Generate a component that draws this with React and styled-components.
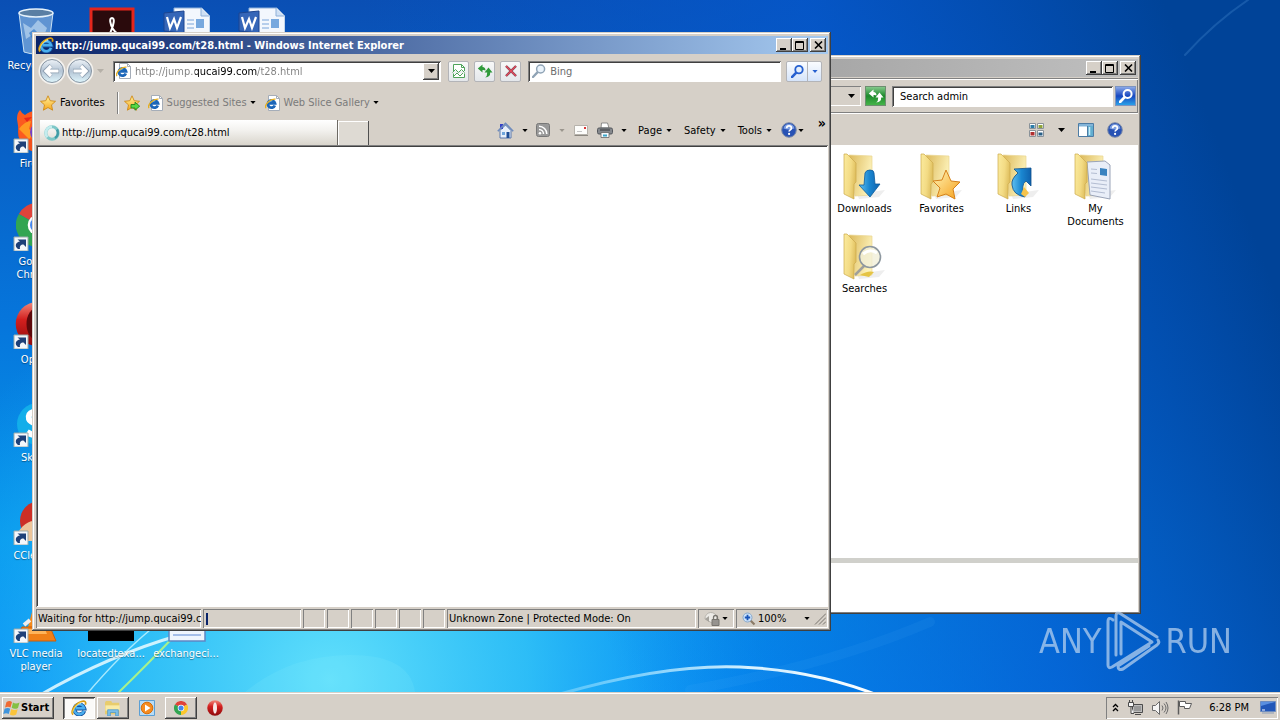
import React from 'react';
import styled, { createGlobalStyle } from 'styled-components';

const FACE = '#d6d0c8';
const raised = `box-shadow: inset -1px -1px #404040, inset 1px 1px #fff, inset -2px -2px #808080;`;
const sunken = `box-shadow: inset 1px 1px #808080, inset -1px -1px #fff;`;
const well = `box-shadow: inset 1px 1px #808080, inset -1px -1px #fff, inset 2px 2px #404040;`;

const GlobalStyle = createGlobalStyle`
  * { box-sizing: border-box; }
  body { margin: 0; font: 11px/13px "DejaVu Sans Condensed", "DejaVu Sans", sans-serif; color: #000; }
  button, input, select { font: inherit; color: inherit; margin: 0; padding: 0; border: 0; background: none; outline: 0; }
  svg { display: block; flex: none; }
  a { color: inherit; text-decoration: none; }
`;

/* ---------- desktop ---------- */
const Screen = styled.div`
  display: flex; flex-direction: column; height: 100vh; position: relative; overflow: hidden;
`;
const Wallpaper = styled.svg`position: absolute; inset: 0; width: 100%; height: 100%;`;
const Desktop = styled.main`flex: 1; position: relative; min-height: 0;`;
const IconGrid = styled.div`
  display: grid; grid-template-columns: repeat(4, 75px); grid-auto-rows: 98px; padding-top: 7px;
`;
const Shortcut = styled.a`
  grid-column: ${p => p.$col}; grid-row: ${p => p.$row};
  display: flex; flex-direction: column; align-items: center; gap: 4px;
  padding: 0 4px 0 1px; color: #fff; text-align: center; text-shadow: 0 1px 1px #0006;
`;
const Watermark = styled.div`
  position: absolute; right: 48px; bottom: 20px; display: flex; align-items: center; gap: 4px;
  color: #b9d3f0; opacity: .72; font-size: 34px; line-height: 62px;
`;

/* ---------- windows ---------- */
const Window = styled.section`
  position: absolute; display: flex; flex-direction: column; padding: 4px 3px 2px 4px; background: ${FACE};
  box-shadow: inset -1px -1px #404040, inset 1px 1px ${FACE}, inset -2px -2px #808080, inset 2px 2px #fff;
`;
const ExplorerWindow = styled(Window)`inset: 55px 139px 78px 340px;`;
const BrowserWindow = styled(Window)`inset: 32px 449px 61px 32px;`;
const TitleBar = styled.header`
  display: flex; align-items: center; height: 18px; padding: 0 2px; color: #fff; font-weight: bold; flex: none;
  background: linear-gradient(90deg, ${p => (p.$active ? '#0a246a, #a6caf0' : '#808080, #c0c0c0')});
`;
const Title = styled.h1`flex: 1; margin: 0; padding-left: 1px; font: inherit; white-space: nowrap; overflow: hidden;`;
const WinButton = styled.button`
  width: 16px; height: 14px; display: grid; place-items: center; background: ${FACE}; ${raised}
  margin-left: ${p => (p.$apart ? 2 : 0)}px;
`;
const Row = styled.div`display: flex; align-items: center; flex: none;`;
const Spacer = styled.span`flex: 1;`;

/* ---------- browser ---------- */
const NavBar = styled(Row)`height: 34px; padding: 0 6px 0 2px; gap: 5px;`;
const Travel = styled.div`display: flex; align-items: center; width: 70px; flex: none;`;
const TravelButton = styled.button`width: 28px; height: 28px;`;
const Caret = styled.button`width: 13px; height: 20px; display: grid; place-items: center;`;
const AddressBox = styled.div`
  display: flex; align-items: center; flex: 1 1 330px; height: 21px; padding: 2px 2px 2px 3px; background: #fff; ${well}
`;
const AddressInput = styled.input`
  flex: 1; min-width: 0; margin-left: 3px; height: 17px; color: transparent;
  background: linear-gradient(90deg, #808080 60px, #000 60px 122px, #808080 122px) no-repeat;
  -webkit-background-clip: text; background-clip: text;
`;
const DropButton = styled.button`
  width: 16px; height: 17px; display: grid; place-items: center; background: ${FACE}; ${raised}
`;
const ToolButton = styled.button`
  width: 21px; height: 21px; display: grid; place-items: center; flex: none;
  border: 1px solid #b3b4b8; border-radius: 2px; background: linear-gradient(#f8f8f8, #e4e7eb);
`;
const ToolGroup = styled.div`display: flex; gap: 5px; padding: 0 2px; flex: none;`;
const SearchBox = styled.div`
  display: flex; align-items: center; flex: 1 1 254px; height: 21px; padding: 0 4px; gap: 4px; background: #fff; ${well}
`;
const SearchInput = styled.input`flex: 1; min-width: 0; color: #6d6d6d; &::placeholder { color: #6d6d6d; opacity: 1; }`;
const GoGroup = styled.div`
  display: flex; border: 1px solid #b3b4b8; border-radius: 2px; background: linear-gradient(#fafcff, #d5e4fa); flex: none;
`;
const GoButton = styled.button`
  width: ${p => p.$w}px; height: 19px; display: grid; place-items: center; & + & { border-left: 1px solid #b3b4b8; }
`;
const FavBar = styled(Row)`height: 29px; padding: 0 4px;`;
const FavButton = styled.button`
  display: flex; align-items: center; gap: ${p => (p.$dim ? 3 : 4)}px; color: ${p => (p.$dim ? '#7b7b7b' : '#000')};
  margin-right: ${p => p.$after}px;
`;
const Divider = styled.span`width: 2px; height: 22px; border-left: 1px solid #808080; border-right: 1px solid #fff; margin: 0 5px 0 12px;`;
const TabRow = styled(Row)`height: 28px; padding-left: 4px; align-items: flex-end;`;
const Tab = styled.button`
  display: flex; align-items: center; gap: 2px; flex: 0 1 298px; height: 25px; padding: 0 4px;
  background: linear-gradient(#fff, #f3f2ef 40%, #d9d5cc); border-right: 1px solid #6d6a64; white-space: nowrap;
`;
const NewTab = styled.button`
  width: 31px; height: 24px; background: #dedad3; box-shadow: inset 1px 1px #fff; border-right: 1px solid #505050;
`;
const CommandBar = styled.div`display: flex; align-items: center; height: 28px; padding: 0 2px 2px 0;`;
const Command = styled.button`
  display: flex; align-items: center; gap: ${p => p.$gap}px; margin-right: ${p => p.$after}px; height: 22px;
`;
const Chevron = styled.button`align-self: flex-start; font-size: 14px; line-height: 12px; font-weight: bold;`;
const Page = styled.div`flex: 1; min-height: 0; background: #fff; ${well}`;
const StatusBar = styled.footer`display: flex; height: 22px; padding: 2px 0 1px; gap: 2px; flex: none;`;
const StatusCell = styled.div`
  flex: ${p => p.$grow || 0} 1 ${p => p.$w}px; min-width: 0; padding: 0 2px; line-height: 17px; height: 19px;
  overflow: hidden; white-space: nowrap; display: flex; align-items: center; ${sunken}
`;
const Progress = styled.span`width: 2px; height: 12px; background: #0a246a; margin-left: 1px;`;
const StatusMenu = styled.button`display: flex; align-items: center; flex: 1; justify-content: space-between; padding: 0 4px;`;
const Zoom = styled.span`display: flex; align-items: center; gap: 2px;`;

/* ---------- explorer ---------- */
const Rebar = styled(Row)`
  height: 36px; margin-top: 1px; padding: 0 2px; gap: 4px; box-shadow: inset 0 1px #808080, inset 0 2px #fff, inset 0 -1px #fff, inset 0 -2px #808080, inset -1px 0 #808080;
`;
const PathBox = styled.div`
  flex: 1; height: 20px; display: flex; justify-content: flex-end; align-items: center; padding-right: 3px; ${sunken}
`;
const Refresh = styled.button`width: 21px; height: 20px; display: grid; place-items: center; background: linear-gradient(#83c88a, #1d8a2c 50%, #46b449); border: 1px solid #6e8e70;`;
const FindBox = styled.input`
  width: 221px; height: 21px; padding: 0 8px; margin-left: 2px; background: #fff; ${well}
  &::placeholder { color: #000; opacity: 1; }
`;
const FindButton = styled.button`width: 21px; height: 20px; display: grid; place-items: center; margin-left: -2px; background: linear-gradient(#8aa8e8, #1747c0 50%, #2aa0e8); border: 1px solid #7d94c0;`;
const ViewBar = styled(Row)`height: 31px; padding-right: 15px; gap: 13px; justify-content: flex-end;`;
const IconButton = styled.button`height: 20px; display: grid; place-items: center;`;
const Files = styled.div`
  flex: 1; background: #fff; min-height: 0; padding: 8px 4px; display: grid; justify-content: end; align-content: start;
  grid-template-columns: repeat(4, 77px); grid-auto-rows: 80px;
`;
const File = styled.a`display: flex; flex-direction: column; align-items: center; gap: 1px; text-align: center; padding: 0 8px;`;
const Details = styled.div`height: 54px; background: #fff; border-top: 5px solid #d0d0cb; flex: none;`;

/* ---------- taskbar ---------- */
const Taskbar = styled.nav`
  position: relative; display: flex; align-items: center; gap: 2px; height: 28px; padding: 3px 2px 0; background: ${FACE};
  box-shadow: inset 0 1px ${FACE}, inset 0 2px #fff; flex: none;
`;
const Start = styled.button`
  display: flex; align-items: center; gap: 0; width: 52px; height: 22px; padding: 0 1px; margin-right: 7px;
  background: ${FACE}; font-weight: bold; ${raised}
`;
const Task = styled.button`
  width: 32px; height: 22px; display: grid; place-items: center;
  ${p => p.$state === 'open' && raised}
  ${p => p.$state === 'active' && `background: #fbfaf8; box-shadow: inset 1px 1px #404040, inset -1px -1px #fff, inset 2px 2px #808080;`}
`;
const Tray = styled.div`display: flex; align-items: center; gap: 8px; height: 22px; width: 172px; padding: 0 2px 0 6px; ${sunken}`;
const Clock = styled.time`flex: 1; text-align: right; padding-right: 3px; white-space: nowrap;`;

/* ---------- drawings ---------- */
const Arrow = ({ c = '#000', big }) => (
  <svg width={big ? 7 : 6} height={big ? 4 : 3} viewBox="0 0 7 4"><path d="M0 0h7L3.500 4z" fill={c} /></svg>
);
const IE = ({ s = 16 }) => (
  <svg width={s} height={s} viewBox="0 0 16 16" fill="none">
    <path d="M13.200 11A5 5 0 1 1 13.300 8.400H5" stroke="#155099" strokeWidth="4" />
    <path d="M13 10.800A5 5 0 1 1 13.100 8.200H5" stroke="#49aeef" strokeWidth="2.500" />
    <path d="M4.200 6.800q2-3.500 6-3" stroke="#b5e4ff" strokeWidth="1.100" />
    <path d="M2.200 14.500C-1 12 4 3.500 10.500 1.500 13.600.6 15.500 1.500 14.300 4.800" stroke="#d89a10" strokeWidth="1.700" />
    <path d="M2.300 13.800C.4 11.500 4.500 4.300 10.200 2.100" stroke="#ffe05a" strokeWidth=".9" />
  </svg>
);
const PageIE = () => (
  <svg width="16" height="16" viewBox="0 0 16 16" fill="none">
    <path d="M3.500.5h8l3 3v12h-11z" fill="#fff" stroke="#a5adb8" /><path d="M11.500.5v3h3" stroke="#a5adb8" />
    <path d="M9.800 10.500A3.600 3.600 0 1 1 10 8.300H3.500" stroke="#1b65b8" strokeWidth="2.800" />
    <path d="M4 7.500q1-2 3.200-1.800" stroke="#8fd0fa" strokeWidth="1" />
    <path d="M1 13.200C-1 10 5 3.500 10.500 4.200" stroke="#e8b020" strokeWidth="1.300" />
  </svg>
);
const STAR = 'M8 .8l2.200 4.900 5.300.6-4 3.600 1.100 5.300L8 12.500l-4.600 2.700 1.100-5.300-4-3.600 5.300-.6z';
const Star = ({ add }) => (
  <svg width="16" height="16" viewBox="0 0 16 16">
    <defs><linearGradient id="star" x2="0" y2="1"><stop stopColor="#fff3a0" /><stop offset="1" stopColor="#f7a81c" /></linearGradient></defs>
    <path d={STAR} fill="url(#star)" stroke="#cf8a18" strokeWidth=".9" />
    {add && <path d="M7 9.500h4V7.200l4.700 4-4.700 4V13H7z" fill="#57d843" stroke="#23851d" strokeWidth=".9" />}
  </svg>
);
const TravelIcon = ({ fwd }) => (
  <svg width="28" height="28" viewBox="0 0 28 28">
    <defs><linearGradient id="travel" x2="0" y2="1"><stop stopColor="#eef3f8" /><stop offset=".5" stopColor="#b4c4d4" /><stop offset="1" stopColor="#dff6fc" /></linearGradient></defs>
    <circle cx="14" cy="14" r="13.500" fill="#f4f2ee" />
    <circle cx="14" cy="14" r="11.500" fill="url(#travel)" stroke="#8794a2" />
    <g transform={fwd ? 'rotate(180 14 14)' : undefined} fill="none">
      <path d="M7.500 14H21M13 8.500L7.500 14l5.500 5.500" stroke="#8d9eb0" strokeWidth="4.400" />
      <path d="M8 14h12.500M13 9l-5 5 5 5" stroke="#fff" strokeWidth="3.200" />
    </g>
  </svg>
);
const Lens = ({ c = '#8fa3b5', fill = '#eaf3fb', s = 14, w = 1.5 }) => (
  <svg width={s} height={s} viewBox="0 0 14 14" fill="none">
    <path d="M5.400 8.400L1 13" stroke={c} strokeWidth={w + 0.8} strokeLinecap="round" /><circle cx="8.600" cy="5" r="4" fill={fill} stroke={c} strokeWidth={w} />
  </svg>
);
const Swap = ({ c = '#2f9a3a' }) => (
  <svg width="16" height="16" viewBox="0 0 16 16" fill={c}>
    <path d="M.8 5.500L5.500 1.500V4q3 0 3 3.500Q7.500 6.800 5.500 7v2.500z" />
    <path d="M7.500 9.500L11.500 4.500l4 5h-2.300q.2 4.500-5 5 2.200-1.500 2-5z" />
  </svg>
);
const Broken = () => (
  <svg width="14" height="16" viewBox="0 0 14 16" fill="none" stroke="#4fa35a">
    <path d="M1.500 8V1.500h8l3 3V8M1.500 10.500v4h11v-4" fill="#fff" /><path d="M9.500 1.500v3h3M.5 9.500l3-3 3 3 3-3 3 3M2 13l3-3 3 3 3-3" />
  </svg>
);
const Stop = () => (
  <svg width="14" height="14" viewBox="0 0 14 14"><path d="M2 2l10 10M12 2L2 12" stroke="#6b4a58" strokeWidth="2.400" /><path d="M2 2l10 10M12 2L2 12" stroke="#e5485a" strokeWidth="1.400" /></svg>
);
const Home = () => (
  <svg width="17" height="17" viewBox="0 0 17 17">
    <path d="M3 8.500v7.500h11V8.500L8.500 3z" fill="#e8f0fa" stroke="#5a79ad" /><path d="M3 2h3v5H3z" fill="#3540c8" />
    <path d="M.8 9.200L8.500 1.500l7.700 7.700" fill="none" stroke="#6f8cbd" strokeWidth="1.600" /><path d="M9.500 10h3v6h-3z" fill="#1f4e96" /><path d="M5 10h3v3H5z" fill="#70a6dc" />
  </svg>
);
const Feed = () => (
  <svg width="14" height="14" viewBox="0 0 14 14" fill="none">
    <rect x=".5" y=".5" width="13" height="13" rx="2" fill="#999" stroke="#777" />
    <circle cx="4" cy="10.300" r="1.300" fill="#fff" /><path d="M3 6.500a4.500 4.500 0 0 1 4.500 4.500M3 3.200A7.800 7.800 0 0 1 10.800 11" stroke="#fff" strokeWidth="1.500" />
  </svg>
);
const Mail = () => (
  <svg width="14" height="11" viewBox="0 0 14 11"><path d="M.5.5h13v9H.5z" fill="#fdfdfb" stroke="#b7b3ac" /><path d="M.5 10.500h13.500" stroke="#8b8780" /><path d="M10 2h2v2h-2z" fill="#d93535" /><path d="M3 6.500h5" stroke="#c5c5c5" /></svg>
);
const Printer = () => (
  <svg width="16" height="16" viewBox="0 0 16 16">
    <path d="M4.500 1h6l1.500 5h-8z" fill="#fff" stroke="#777" strokeWidth=".8" /><rect x=".5" y="6" width="15" height="6" rx="1.500" fill="#85888d" stroke="#55585d" />
    <path d="M3 8h10" stroke="#34373b" /><path d="M4 10.500h8v5H4z" fill="#f4f8fc" stroke="#666" strokeWidth=".8" /><path d="M6 12.500h4v2H6z" fill="#3ba5c8" />
  </svg>
);
const Help = () => (
  <svg width="16" height="16" viewBox="0 0 16 16" fill="none">
    <circle cx="8" cy="8" r="7.300" fill="#2852b4" stroke="#7e8ca8" /><path d="M2.500 6.500a5.600 5.600 0 0 1 11 0q-5.500 2-11 0z" fill="#7fa0e2" />
    <path d="M5.700 6.200c0-3 4.700-3 4.700 0 0 1.600-2.300 1.700-2.300 3.400" stroke="#fff" strokeWidth="1.700" /><circle cx="8.100" cy="11.900" r="1.100" fill="#fff" />
  </svg>
);
const Ring = () => (
  <svg width="16" height="16" viewBox="0 0 16 16" fill="none">
    <circle cx="8" cy="8" r="6.200" stroke="#7fc8c8" strokeWidth="3" /><path d="M8 1.800A6.200 6.200 0 0 0 3.500 12.200" stroke="#c4ecee" strokeWidth="2.600" /><path d="M13 4.500a6.200 6.200 0 0 1-2 8.500" stroke="#409ba5" strokeWidth="2.400" />
  </svg>
);
const Lock = () => (
  <svg width="18" height="16" viewBox="0 0 18 16"><path d="M1 8a6 6 0 0 1 12-1L8 12z" fill="#eceae6" stroke="#b8b4ad" /><path d="M1 8l4-3v6z" fill="#a5a29c" /><path d="M8 8.500h7v6H8z" fill="#96938f" stroke="#77746f" /><path d="M9.500 8V6.500a2 2 0 0 1 4 0V8" fill="none" stroke="#77746f" strokeWidth="1.300" /></svg>
);
const ZoomIn = () => (
  <svg width="14" height="14" viewBox="0 0 14 14" fill="none"><path d="M8.500 8.500l4 4" stroke="#8a7a66" strokeWidth="2.200" /><circle cx="5.500" cy="5.500" r="4.500" fill="#cfe4fa" stroke="#88a8cc" /><path d="M5.500 2.800v5.400M2.800 5.500h5.400" stroke="#1a55b8" strokeWidth="1.800" /></svg>
);
const Grip = () => <svg width="12" height="13" viewBox="0 0 12 13" stroke="#77736c"><path d="M1 12.500L12 1.500M5 12.500l7-7M9 12.500l3-3" /></svg>;
const MinGlyph = () => <svg width="10" height="9" viewBox="0 0 10 9"><path d="M1 7h6v2H1z" /></svg>;
const MaxGlyph = () => <svg width="10" height="9" viewBox="0 0 10 9"><path d="M.5.5h8v8h-8zM.5 1.500h8" fill="none" stroke="#000" /></svg>;
const CloseGlyph = () => <svg width="9" height="8" viewBox="0 0 9 8"><path d="M1 .5l7 7M8 .5l-7 7" stroke="#000" strokeWidth="1.600" /></svg>;
const Views = () => (
  <svg width="16" height="16" viewBox="0 0 16 16"><path d="M.5 1.500h6v5h-6zM8.500 1.500h6v5h-6zM.5 8.500h6v6h-6zM8.500 8.500h6v6h-6z" fill="#fff" stroke="#8a9299" /><path d="M1.500 3h4v3h-4z" fill="#2c7ca8" /><path d="M9.500 3h4v3h-4z" fill="#8fa43a" /><path d="M1.500 10h4v3.500h-4z" fill="#b02f2f" /><path d="M9.500 10.500h4v3h-4z" fill="#285f86" /></svg>
);
const Pane = () => (
  <svg width="16" height="14" viewBox="0 0 16 14"><path d="M.5.5h15v13H.5z" fill="#fff" stroke="#4d7ca4" /><path d="M1 1h14v2.500H1z" fill="#83b4d8" /><path d="M10 3h5v10h-5z" fill="#62aed0" /><path d="M9.500 3v10" stroke="#4d7ca4" /><path d="M11.500 4v8" stroke="#c8ecf8" strokeWidth="1.500" /></svg>
);
const FolderIcon = ({ kind }) => (
  <svg width="48" height="48" viewBox="0 0 48 48">
    <defs>
      <linearGradient id="flap" x2="1" y2=".3"><stop stopColor="#fbeb9e" /><stop offset=".6" stopColor="#f3db84" /><stop offset="1" stopColor="#e0c060" /></linearGradient>
      <linearGradient id="inner" x2="1" y2=".4"><stop stopColor="#dcb95a" /><stop offset="1" stopColor="#fdf2ba" /></linearGradient>
      <linearGradient id="blue" x2="1"><stop stopColor="#5fc0f0" /><stop offset=".5" stopColor="#1a86d0" /><stop offset="1" stopColor="#0f62ae" /></linearGradient>
      <linearGradient id="gold" x2="1" y2="1"><stop stopColor="#fff6b8" /><stop offset="1" stopColor="#f59f1a" /></linearGradient>
    </defs>
    <path d="M16 41l28-4-6 7-20 2z" fill="#ddd" opacity=".5" />
    <path d="M8 2l23 1v39L14 43z" fill="url(#inner)" stroke="#e9d690" strokeWidth=".7" />
    {kind === 'docs' && <><path d="M15 9l18-1 5 4v34l-20-4z" fill="#e9eef8" stroke="#9aa4b8" /><path d="M28 15l7 1v7l-7-1z" fill="#3a83c0" /><path d="M19 16l6 .5M19 20l6 .5M19 26l16 2M19 30l16 2M19 34l16 2M19 38l14 2" stroke="#b3bdd2" /></>}
    <path d="M3 1l3 0 9 9v19l-2 2v15L3 41z" fill="url(#flap)" stroke="#cba94c" strokeWidth=".7" />
    {kind === 'down' && <path d="M24 20q1-3 5-3t4 3l1 11h5L29 44 18 32h5z" fill="url(#blue)" stroke="#0d5c9c" strokeWidth=".8" />}
    {kind === 'star' && <path d="M28 17l5 11 9 1-7 7 2 10-9-5-9 3 3-9-7-7 9-1z" fill="url(#gold)" stroke="#d5811b" />}
    {kind === 'link' && <><path d="M19 16l17-1v18l-5-5q-6 4-1 16-12-2-13-12-1-6 6-12z" fill="url(#blue)" stroke="#0d4f8c" strokeWidth=".8" /><path d="M29 34l5 6-4 4-4-3z" fill="#f5c34c" /></>}
    {kind === 'find' && <><path d="M14 42l9-9" stroke="#a0a09c" strokeWidth="2.500" /><path d="M19 42q8-5 14-3l-5 5z" fill="#e5c445" /><circle cx="29" cy="24" r="10.500" fill="#f1efd8" fillOpacity=".8" stroke="#8d979f" strokeWidth="1.600" /><path d="M22 21q7-6 14-1" stroke="#fff" strokeWidth="3" fill="none" /></>}
  </svg>
);
const Wing = ({ s = 18 }) => (
  <svg width={s} height={s} viewBox="0 0 18 18">
    <path d="M3.500 3C6 1.500 7.500 2 9 3L7.500 8.500C6 7.500 4 7.500 2 8.500z" fill="#ef6a32" /><path d="M10 3.500c2 1.300 4 1.200 6.500 0L15 9c-2.500 1.300-4.500 1-6.300-.2z" fill="#84c043" />
    <path d="M1.600 9.800C4 8.600 5.600 8.800 7.200 9.700L5.700 15C4 14 2.300 14 .3 15z" fill="#3f94dc" /><path d="M8.300 10c2 1.200 4 1.300 6.400.2L13.200 15.500c-2.400 1.300-4.500 1.100-6.300-.1z" fill="#fac43c" />
  </svg>
);
const Chrome = ({ s = 16 }) => (
  <svg width={s} height={s} viewBox="0 0 32 32">
    <path d="M16 16L2.100 8A16 16 0 0 1 29.900 8z" fill="#e0433a" /><path d="M16 16L29.900 8A16 16 0 0 1 16 32z" fill="#fbc72b" /><path d="M16 16l0 16A16 16 0 0 1 2.100 8z" fill="#32a551" />
    <circle cx="16" cy="16" r="7.500" fill="#fff" /><circle cx="16" cy="16" r="5.800" fill="#4486ee" />
  </svg>
);
const Opera = ({ s = 16 }) => (
  <svg width={s} height={s} viewBox="0 0 32 32"><defs><linearGradient id="opera" x2="0" y2="1"><stop stopColor="#f28a7c" /><stop offset=".4" stopColor="#d3201f" /><stop offset="1" stopColor="#8d0a0c" /></linearGradient></defs><circle cx="16" cy="16" r="15.500" fill="url(#opera)" /><ellipse cx="16" cy="16" rx={s > 20 ? 8 : 4} ry="11.500" fill={s > 20 ? '#5d090b' : '#f7e9e7'} /></svg>
);
const Badge = () => <><path d="M2 34h14v14H2z" fill="#f4f7fb" stroke="#9aa" /><path d="M6 46c-4-3-2-7 2-7.500L5.500 36.500H14V44l-2.500-2.500c-3 0-4 2-3.500 4.500z" fill="#1d4078" /></>;
const Big = ({ kind }) => (
  <svg width="48" height="48" viewBox="0 0 48 48">
    {kind === 'bin' && <><path d="M7 6l5 39q12 4 24 0l5-39z" fill="#8fb9e0" fillOpacity=".65" stroke="#c9e2f5" /><ellipse cx="24" cy="6" rx="17" ry="4" fill="#5a7fa4" stroke="#e6f2fb" strokeWidth="1.500" /><path d="M11 16l8 5 7-8 9 8-4 10-8-5-9 6z" fill="#d6e9f8" fillOpacity=".55" /><path d="M17 26l5-4 6 6-6 7z" fill="#2f79c9" opacity=".7" /></>}
    {kind === 'pdf' && <><path d="M4 2h42v44H4z" fill="#2a0a0c" stroke="#e5261c" strokeWidth="3" /><path d="M25 11c3 0 2 6-1 13-2 5-6 9-8 8M25 11c-3 0-2 6 1 11 3 5 8 7 10 5" fill="none" stroke="#fff" strokeWidth="2" /></>}
    {kind === 'doc' && <><path d="M12 1h28l8 8v38H12z" fill="#f3f7fd" stroke="#8fb0d8" /><path d="M39 1v8h8" fill="#cfe0f4" stroke="#8fb0d8" /><path d="M25 13h7M25 17h7M25 21h7M14 33h28M14 37h28" stroke="#7ba5da" /><path d="M34 12h8v9h-8z" fill="#77a8de" /><path d="M2 6l20-2v22L2 24z" fill="#3566b8" stroke="#1c4590" /><path d="M5 10l3 11 4-9 3 9 4-11" fill="none" stroke="#fff" strokeWidth="2.200" /></>}
    {kind === 'text' && <><path d="M7 2h36v44H7z" fill="#eef5fd" stroke="#5d86c4" strokeWidth="1.500" /><path d="M11 34h28M11 40h28" stroke="#5b87d4" /></>}
    {kind === 'black' && <path d="M1 2h46v44H1z" fill="#000" />}
    {kind === 'fox' && <><circle cx="26" cy="27" r="20" fill="#f2501c" /><path d="M5 14q0-6 3-9 2 4 5 5 5-4 10-4l18 4-4 24H8z" fill="#fb5a20" /><path d="M7 24q6-8 12-8l-2 8 6 4-6 6z" fill="#ff9a22" /><path d="M12 13l8-1-5 5z" fill="#e8261b" /><circle cx="28" cy="27" r="10" fill="#7440c9" /></>}
    {kind === 'skype' && <><circle cx="26" cy="25" r="21" fill="#12aeea" /><path d="M32 15c-8-5-17-2-15 5 2 6 16 4 15 11-1 6-10 7-17 2" fill="none" stroke="#fff" strokeWidth="6" /></>}
    {kind === 'cc' && <><circle cx="28" cy="24" r="20" fill="#cc2f26" /><path d="M2 44c4-12 12-20 20-20l8 20z" fill="#edc59a" /><path d="M22 16l10-6v12z" fill="#b9d8ee" /></>}
    {kind === 'vlc' && <><path d="M24 2l8 30H16z" fill="#f58a1c" /><path d="M10 32h28l6 14H4z" fill="#f08018" stroke="#c95d0b" /><path d="M15 34l18 0 2 5H13z" fill="#ffb45a" /><path d="M12 30l6-5" stroke="#eee" strokeWidth="4" /></>}
    {kind === 'chrome' && <g transform="translate(4)"><Chrome s={44} /></g>}
    {kind === 'opera' && <g transform="translate(3)"><Opera s={46} /></g>}
    {['fox', 'skype', 'cc', 'vlc', 'chrome', 'opera'].includes(kind) && <Badge />}
  </svg>
);
const FolderTask = () => <svg width="18" height="16" viewBox="0 0 20 18"><path d="M1 3l1-2h6l1 2h8v13H1z" fill="#e8cc6c" /><path d="M1.500 6h16v6h-16z" fill="#f9eba6" /><path d="M4 18v-7h12v7h-3v-4H7v4z" fill="#7cc0ea" stroke="#438fc6" strokeWidth=".8" /></svg>;
const Media = () => <svg width="16" height="16" viewBox="0 0 16 16"><path d="M.5.5h15v15H.5z" fill="#b8dcf5" stroke="#5b9fd4" /><circle cx="8" cy="8" r="5.800" fill="#f58b1f" stroke="#d76d08" /><path d="M6 4.500L11.500 8 6 11.500z" fill="#fff" /></svg>;
const Net = () => <svg width="17" height="16" viewBox="0 0 17 16" fill="#f6f6f6" stroke="#4c4c4c"><path d="M5.500 4.500h10v8h-10z" fill="#bdbdbd" /><path d="M7 6h7v5H7z" fill="#999" stroke="none" /><path d="M8 14.500h6M1.500 2.500h5v4h-5zM2.500 0v2.500M5.500 0v2.500M4 6.500v7h3" /></svg>;
const Speaker = () => <svg width="17" height="14" viewBox="0 0 17 14" fill="none" stroke="#6a6a6a"><path d="M.5 4.500h3l4-4v13l-4-4h-3z" fill="#f5f5f5" /><path d="M10 4.500q2 2.500 0 5M12 2.500q4 4.500 0 9M14 1q4 6 0 12" /></svg>;
const Flag = () => <svg width="16" height="15" viewBox="0 0 16 15" fill="#fff" stroke="#5c5c5c"><path d="M1.500.5v14" strokeWidth="1.500" /><path d="M2.500 1.500h6v2h6l-2 5h-5v-2h-5z" /></svg>;
const Monitor = () => <svg width="16" height="13" viewBox="0 0 16 13"><path d="M.5.5h15v10H.5z" fill="#2257b8" stroke="#6d8cc0" /><path d="M1 1h14L1 5z" fill="#5a8fe0" /><path d="M2 12h12" stroke="#8a9bb5" /><path d="M2 8.500h3v1H2z" fill="#fff" /></svg>;
const UpChevrons = () => <svg width="7" height="9" viewBox="0 0 7 9" fill="none" stroke="#000" strokeWidth="1.300"><path d="M1 4l2.500-2.500L6 4M1 8l2.500-2.500L6 8" /></svg>;

const Scenery = () => (
  <Wallpaper viewBox="0 0 1280 720" preserveAspectRatio="none" aria-hidden="true">
    <defs>
      <linearGradient id="sky" x2="0" y2="1"><stop stopColor="#0a4fb4" /><stop offset=".45" stopColor="#0676dc" /><stop offset=".75" stopColor="#0598ec" /><stop offset="1" stopColor="#078cf6" /></linearGradient>
      <radialGradient id="glow" gradientUnits="userSpaceOnUse" cx="330" cy="680" r="440"><stop stopColor="#66e4fc" stopOpacity=".95" /><stop offset=".45" stopColor="#3accf8" stopOpacity=".75" /><stop offset="1" stopColor="#18a8fa" stopOpacity="0" /></radialGradient>
      <linearGradient id="shade" x1=".4" y1=".55" x2="1" y2=".42"><stop stopColor="#0458cc" stopOpacity="0" /><stop offset=".55" stopColor="#0458cc" stopOpacity=".75" /><stop offset="1" stopColor="#004398" /></linearGradient>
      <linearGradient id="arc" x2="1"><stop stopColor="#8fdcff" stopOpacity=".5" /><stop offset=".6" stopColor="#d8f2ff" /><stop offset="1" stopColor="#fff" /></linearGradient>
    </defs>
    <path d="M0 0h1280v720H0z" fill="url(#sky)" />
    <path d="M0 0h1280v720H0z" fill="url(#glow)" />
    <path d="M0 0h1280v720H0z" fill="url(#shade)" />
    <path d="M245 692Q290 655 350 655T415 692z" fill="#8bf0ff" opacity=".14" />
    <g fill="none" strokeLinecap="round">
      <path d="M40 695Q110 655 180 635" stroke="#eafcff" strokeWidth="3" opacity=".85" />
      <path d="M86 695Q120 655 150 630" stroke="#c8f6ff" strokeWidth="1.500" opacity=".8" />
      <path d="M116 695Q150 662 180 630" stroke="#a6f28c" strokeWidth="2" />
      <path d="M560 694Q665 664 740 667T880 696" stroke="url(#arc)" strokeWidth="3" />
      <path d="M690 690Q830 665 930 622" stroke="#68c4ff" strokeWidth="10" opacity=".08" />
      <path d="M1185 55Q1215 22 1248 0" stroke="#5c9ee0" strokeWidth="2" opacity=".25" />
    </g>
  </Wallpaper>
);

const SHORTCUTS = [
  ['bin', 'Recycle Bin', 1, 1], ['pdf', '', 2, 1], ['doc', '', 3, 1], ['doc', '', 4, 1],
  ['fox', 'Firefox', 1, 2], ['chrome', 'Google Chrome', 1, 3], ['opera', 'Opera', 1, 4], ['skype', 'Skype', 1, 5],
  ['cc', 'CCleaner', 1, 6], ['vlc', 'VLC media player', 1, 7], ['black', 'locatedtexa...', 2, 7], ['text', 'exchangeci...', 3, 7],
];
const FOLDERS = [['down', 'Downloads'], ['star', 'Favorites'], ['link', 'Links'], ['docs', 'My Documents'], ['find', 'Searches']];

const Controls = () => (
  <>
    <WinButton aria-label="Minimize"><MinGlyph /></WinButton>
    <WinButton aria-label="Maximize"><MaxGlyph /></WinButton>
    <WinButton aria-label="Close" $apart><CloseGlyph /></WinButton>
  </>
);

const Explorer = () => (
  <ExplorerWindow aria-label="admin">
    <TitleBar><Spacer /><Controls /></TitleBar>
    <Rebar>
      <PathBox><Caret aria-label="Previous locations"><Arrow big /></Caret></PathBox>
      <Refresh aria-label="Refresh"><Swap c="#fff" /></Refresh>
      <FindBox aria-label="Search admin" placeholder="Search admin" />
      <FindButton aria-label="Search"><Lens c="#fff" fill="none" w={2} /></FindButton>
    </Rebar>
    <ViewBar>
      <IconButton aria-label="Change your view"><Views /></IconButton>
      <IconButton aria-label="More options"><Arrow big /></IconButton>
      <IconButton aria-label="Preview pane"><Pane /></IconButton>
      <IconButton aria-label="Help"><Help /></IconButton>
    </ViewBar>
    <Files>
      {FOLDERS.map(([kind, name]) => <File href="#" key={name}><FolderIcon kind={kind} />{name}</File>)}
    </Files>
    <Details />
  </ExplorerWindow>
);

const Browser = () => (
  <BrowserWindow aria-label="Internet Explorer">
    <TitleBar $active><IE /><Title>http://jump.qucai99.com/t28.html - Windows Internet Explorer</Title><Controls /></TitleBar>
    <NavBar>
      <Travel>
        <TravelButton aria-label="Back"><TravelIcon /></TravelButton>
        <TravelButton aria-label="Forward"><TravelIcon fwd /></TravelButton>
        <Caret aria-label="Recent pages"><Arrow big c="#b5b0a8" /></Caret>
      </Travel>
      <AddressBox>
        <PageIE />
        <AddressInput aria-label="Address" defaultValue="http://jump.qucai99.com/t28.html" />
        <DropButton aria-label="Show address list"><Arrow big /></DropButton>
      </AddressBox>
      <ToolGroup>
        <ToolButton aria-label="Compatibility view"><Broken /></ToolButton>
        <ToolButton aria-label="Refresh"><Swap /></ToolButton>
        <ToolButton aria-label="Stop"><Stop /></ToolButton>
      </ToolGroup>
      <SearchBox><Lens s={14} /><SearchInput aria-label="Search" placeholder="Bing" /></SearchBox>
      <GoGroup>
        <GoButton $w={20} aria-label="Search"><Lens c="#2660d0" s={13} w={2} fill="#e4effc" /></GoButton>
        <GoButton $w={14} aria-label="Search options"><Arrow c="#2660d0" /></GoButton>
      </GoGroup>
    </NavBar>
    <FavBar>
      <FavButton $after={0}><Star />Favorites</FavButton>
      <Divider />
      <FavButton $after={8} aria-label="Add to favorites bar"><Star add /></FavButton>
      <FavButton $after={9} $dim><PageIE />Suggested Sites<Arrow /></FavButton>
      <FavButton $after={0} $dim><PageIE />Web Slice Gallery<Arrow /></FavButton>
    </FavBar>
    <TabRow>
      <Tab><Ring />http://jump.qucai99.com/t28.html</Tab>
      <NewTab aria-label="New tab" />
      <Spacer />
      <CommandBar>
        <Command $gap={8} $after={8} aria-label="Home"><Home /><Arrow /></Command>
        <Command $gap={9} $after={9} aria-label="Feeds"><Feed /><Arrow c="#9b968e" /></Command>
        <Command $gap={0} $after={9} aria-label="Read mail"><Mail /></Command>
        <Command $gap={8} $after={11} aria-label="Print"><Printer /><Arrow /></Command>
        <Command $gap={4} $after={12}>Page<Arrow /></Command>
        <Command $gap={4} $after={12}>Safety<Arrow /></Command>
        <Command $gap={4} $after={9}>Tools<Arrow /></Command>
        <Command $gap={1} $after={14} aria-label="Help"><Help /><Arrow /></Command>
        <Chevron aria-label="More commands">»</Chevron>
      </CommandBar>
    </TabRow>
    <Page />
    <StatusBar>
      <StatusCell $w={165}>Waiting for http://jump.qucai99.com</StatusCell>
      <StatusCell $w={98}><Progress /></StatusCell>
      {[0, 1, 2, 3, 4, 5].map(n => <StatusCell key={n} $w={22} />)}
      <StatusCell $w={240} $grow={1}>Unknown Zone | Protected Mode: On</StatusCell>
      <StatusCell $w={36}><StatusMenu aria-label="Security"><Lock /><Arrow /></StatusMenu></StatusCell>
      <StatusCell $w={92}><StatusMenu><Zoom><ZoomIn />100%</Zoom><Arrow /></StatusMenu><Grip /></StatusCell>
    </StatusBar>
  </BrowserWindow>
);

export default function App() {
  return (
    <Screen>
      <GlobalStyle />
      <Scenery />
      <Desktop>
        <IconGrid>
          {SHORTCUTS.map(([kind, name, col, row]) => (
            <Shortcut href="#" key={`${col}-${row}`} $col={col} $row={row} aria-label={name || kind}><Big kind={kind} />{name}</Shortcut>
          ))}
        </IconGrid>
        <Explorer />
        <Browser />
        <Watermark>
          ANY
          <svg width="56" height="62" viewBox="0 0 56 62" fill="none" stroke="currentColor" strokeWidth="3" strokeLinejoin="round" strokeLinecap="round">
            <path d="M8 10Q3 6 3 12v43q0 4 4 2l40-25-31-20v32" />
            <path d="M11 45V6q0-5 5-2l36 23M53 30q2 3-1 5L18 59q-5 2-5-3l31-20" />
          </svg>
          RUN
        </Watermark>
      </Desktop>
      <Taskbar>
        <Start><Wing />Start</Start>
        <Task $state="active" aria-label="Internet Explorer"><IE s={16} /></Task>
        <Task $state="open" aria-label="Windows Explorer"><FolderTask /></Task>
        <Task aria-label="Media Player"><Media /></Task>
        <Task $state="open" aria-label="Chrome"><Chrome s={14} /></Task>
        <Task aria-label="Opera"><Opera s={16} /></Task>
        <Spacer />
        <Tray>
          <IconButton aria-label="Show hidden icons"><UpChevrons /></IconButton>
          <Net /><Speaker /><Flag />
          <Clock>6:28 PM</Clock>
          <Monitor />
        </Tray>
      </Taskbar>
    </Screen>
  );
}
